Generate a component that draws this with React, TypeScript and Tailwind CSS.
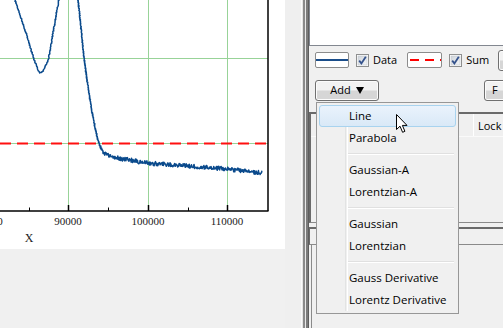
type Pt = [number, number];

// seeded noise so the curve is the same on every render
let seed = 7;
const rnd = () => {
  seed = (seed * 1103515245 + 12345) & 0x7fffffff;
  return seed / 0x7fffffff;
};

function spline(pts: Pt[], step: number): Pt[] {
  const out: Pt[] = [];
  for (let i = 0; i < pts.length - 1; i++) {
    const p0 = pts[Math.max(i - 1, 0)];
    const p1 = pts[i];
    const p2 = pts[i + 1];
    const p3 = pts[Math.min(i + 2, pts.length - 1)];
    const len = Math.hypot(p2[0] - p1[0], p2[1] - p1[1]);
    const n = Math.max(2, Math.round(len / step));
    for (let k = 0; k < n; k++) {
      const t = k / n;
      const t2 = t * t;
      const t3 = t2 * t;
      const f = (a: number, b: number, c: number, d: number) =>
        0.5 * (2 * b + (-a + c) * t + (2 * a - 5 * b + 4 * c - d) * t2 + (-a + 3 * b - 3 * c + d) * t3);
      out.push([f(p0[0], p1[0], p2[0], p3[0]), f(p0[1], p1[1], p2[1], p3[1])]);
    }
  }
  out.push(pts[pts.length - 1]);
  return out;
}

function noisy(pts: Pt[]): string {
  return pts
    .map(([x, y], i) => {
      const amp = x > 100 ? 2.1 : 0.6;
      const ny = y + (rnd() - 0.5) * 2 * amp;
      const nx = x + (x > 100 ? 0 : (rnd() - 0.5) * 0.8);
      return `${i ? "L" : "M"}${nx.toFixed(2)} ${ny.toFixed(2)}`;
    })
    .join(" ");
}

const valley: Pt[] = [
  [13, -6], [15, 0], [25, 30], [33, 56], [38, 69], [41, 73], [45, 67], [49, 56], [53, 33], [57, 10], [60, -6],
];
const drop: Pt[] = [
  [77, -6], [78, 0], [81, 28], [84, 57], [88, 87], [93, 117], [98, 140], [102, 150], [107, 155], [117, 158],
  [130, 160], [148, 163], [175, 165], [200, 167], [227, 169], [262, 173],
];
const pathA = noisy(spline(valley, 0.8));
const pathB = noisy(spline(drop, 0.45));

function Plot() {
  const gridX = [68, 148, 227];
  return (
    <svg width="285" height="249" className="block">
      <g stroke="#98d398" strokeWidth="1">
        {gridX.map((x) => (
          <line key={x} x1={x + 0.5} y1="0" x2={x + 0.5} y2="211" />
        ))}
        <line x1="0" y1="58.5" x2="268" y2="58.5" />
        <line x1="0" y1="143.5" x2="268" y2="143.5" />
      </g>
      <line x1="0" y1="143.5" x2="268" y2="143.5" stroke="#ff1010" strokeWidth="2.2" strokeDasharray="11 6" />
      <path d={pathA} fill="none" stroke="#0a4a8c" strokeWidth="1.5" strokeLinejoin="round" />
      <path d={pathB} fill="none" stroke="#0a4a8c" strokeWidth="1.5" strokeLinejoin="round" />
      <g stroke="#000" strokeWidth="1.5">
        <line x1="0" y1="211" x2="268.5" y2="211" />
        <line x1="268" y1="0" x2="268" y2="211" />
        {gridX.map((x) => (
          <line key={x} x1={x + 0.5} y1="205" x2={x + 0.5} y2="211" />
        ))}
        {[29.5, 108.5, 188.5].map((x) => (
          <line key={x} x1={x} y1="207.5" x2={x} y2="211" strokeWidth="1" />
        ))}
      </g>
      <g fontFamily="'Liberation Serif', serif" fontSize="11" fill="#222" textAnchor="middle">
        <text x="-11" y="225">80000</text>
        <text x="68" y="225">90000</text>
        <text x="148" y="225">100000</text>
        <text x="227" y="225">110000</text>
        <text x="29" y="242" fontSize="12">X</text>
      </g>
    </svg>
  );
}

function Check() {
  return (
    <svg width="13" height="13" className="block shrink-0">
      <defs>
        <linearGradient id="cb" x1="0" y1="0" x2="1" y2="1">
          <stop offset="0" stopColor="#cfd4da" />
          <stop offset="1" stopColor="#f4f6f8" />
        </linearGradient>
      </defs>
      <rect x="0.5" y="0.5" width="12" height="12" fill="#fff" stroke="#8e8f8f" />
      <rect x="2" y="2" width="9" height="9" fill="url(#cb)" stroke="#c0c6cc" strokeWidth="0.6" />
      <path d="M3.2 6.6 L5.4 9.4 L9.8 2.8" fill="none" stroke="#34528c" strokeWidth="1.8" />
    </svg>
  );
}

function Button({ children, className }: { children: React.ReactNode; className?: string }) {
  return (
    <div
      className={
        "h-[21px] shrink-0 rounded-[3px] border border-[#707070] bg-gradient-to-b from-[#f2f2f2] from-45% to-[#d6d6d6] to-55% shadow-[inset_0_0_0_1px_#fcfcfc] flex items-center text-[11px] text-black " +
        (className ?? "")
      }
    >
      {children}
    </div>
  );
}

function Cursor() {
  return (
    <svg width="13" height="20" viewBox="0 0 13 20" className="absolute left-[396px] top-[114px]">
      <path
        d="M0.5 0.5 L0.5 15.5 L4 12.2 L6.6 18.3 L8.9 17.3 L6.4 11.4 L11 11.4 Z"
        fill="#fff"
        stroke="#000"
        strokeWidth="1"
        strokeLinejoin="miter"
      />
    </svg>
  );
}

const menu: (string | null)[] = [
  "Line",
  "Parabola",
  null,
  "Gaussian-A",
  "Lorentzian-A",
  null,
  "Gaussian",
  "Lorentzian",
  null,
  "Gauss Derivative",
  "Lorentz Derivative",
];

function Menu() {
  return (
    <div className="absolute left-[316px] top-[102px] w-[143px] h-[212px] border border-[#979797] bg-[#f0f0f0] p-[2px]">
      <div className="absolute left-[28px] top-[2px] bottom-[2px] w-[2px] border-l border-[#e2e3e3] shadow-[1px_0_0_#ffffff]" />
      <div className="relative flex flex-col">
        {menu.map((m, i) =>
          m === null ? (
            <div key={i} className="h-[10px] flex items-center pl-[29px] pr-[2px]">
              <div className="h-[2px] w-full border-t border-[#e0e0e0] border-b-white border-b" />
            </div>
          ) : (
            <div
              key={i}
              className={
                "h-[22px] flex items-center pl-[29px] text-[11.5px] text-black rounded-[3px] border " +
                (i === 0
                  ? "border-[#a8d3ef] bg-gradient-to-b from-[#eaf3fc] to-[#d9e9f7]"
                  : "border-transparent")
              }
            >
              {m}
            </div>
          )
        )}
      </div>
    </div>
  );
}

export default function App() {
  return (
    <div className="relative w-[503px] h-[328px] overflow-hidden bg-[#f0f0f0] flex font-['Open_Sans',sans-serif]">
      {/* plot side */}
      <div className="w-[285px] shrink-0 flex flex-col">
        <div className="h-[249px] bg-white">
          <Plot />
        </div>
      </div>
      <div className="w-[16px] shrink-0 bg-[#efefef]" />
      {/* splitter */}
      <div className="w-[1px] shrink-0 bg-[#fbfbfb]" />
      <div className="w-[1px] shrink-0 bg-[#e4e4e4]" />
      <div className="w-[2px] shrink-0 bg-[#8a8a8a]" />
      <div className="w-[1px] shrink-0 bg-[#e9e9e9]" />
      <div className="w-[2px] shrink-0 bg-[#7c7c7c]" />
      <div className="w-[1px] shrink-0 bg-[#5e5e5e]" />

      {/* right panel */}
      <div className="flex-1 flex flex-col min-w-0">
        <div className="h-[46px] shrink-0 bg-white border-l border-b border-[#828790]" />
        <div className="mt-[6px] h-[16px] flex items-center">
          <div className="ml-[6px] w-[34px] h-[16px] shrink-0 rounded-[2px] border border-[#8c8c8c] bg-white flex items-center">
            <div className="w-full h-[1.5px] bg-[#1a4d8a]" />
          </div>
          <div className="ml-[7px] shrink-0">
            <Check />
          </div>
          <span className="ml-[4px] shrink-0 text-[11px] text-black">Data</span>
          <div className="ml-[10px] w-[35px] h-[16px] shrink-0 rounded-[2px] border border-[#8c8c8c] bg-white flex items-center">
            <svg width="33" height="4" className="block">
              <line x1="0" y1="2" x2="33" y2="2" stroke="#ff0000" strokeWidth="2.2" strokeDasharray="9 6" strokeDashoffset="-2" />
            </svg>
          </div>
          <div className="ml-[7px] shrink-0">
            <Check />
          </div>
          <span className="ml-[4px] shrink-0 text-[11px] text-black">Sum</span>
          <Button className="ml-[9px] w-[30px]">{""}</Button>
        </div>
        <div className="mt-[12px] flex items-center">
          <Button className="ml-[6px] w-[64px] justify-center gap-[5px]">
            <span>Add</span>
            <svg width="8" height="7" viewBox="0 0 8 7" className="block">
              <path d="M0 0 H8 L4 7 Z" fill="#000" />
            </svg>
          </Button>
          <Button className="ml-[105px] w-[40px] pl-[7px]">F</Button>
        </div>
        <div className="mt-[11px] h-[111px] shrink-0 border-t-2 border-l-2 border-b border-t-[#6a6a6a] border-l-[#6a6a6a] border-b-[#8a8a8a] bg-[#f0f0f0]">
          <div className="h-[23px] flex border-b border-[#fafafa]">
            <div className="w-[163px] shrink-0 border-r border-white" />
            <span className="pl-[4px] text-[11px] leading-[23px] text-black">Lock</span>
          </div>
        </div>
        <div className="mt-[4px] h-[18px] shrink-0 border-t-2 border-l border-[#6a6a6a] border-b border-b-[#8a8a8a]" />
        <div className="flex-1 border-l border-[#8a8a8a] ml-[2px]" />
      </div>

      <Menu />
      <Cursor />
    </div>
  );
}
